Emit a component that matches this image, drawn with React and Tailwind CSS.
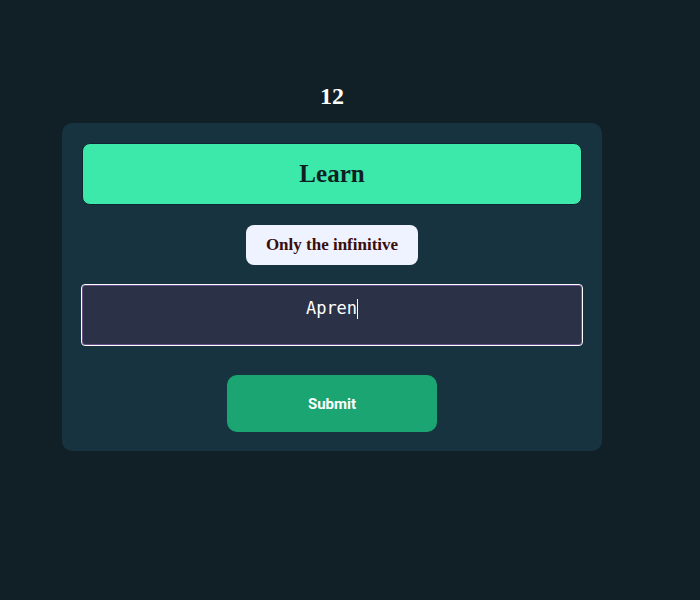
import React from "react";

export default function App() {
  return (
    <div className="min-h-[600px] w-full bg-[#111f26] pt-[80px]">
      <h1 className="w-[540px] ml-[62px] text-center text-2xl font-bold text-white font-['Liberation_Serif',serif] leading-8 mb-[11px]">
        12
      </h1>

      <div className="w-[540px] ml-[62px] rounded-[10px] bg-[#183340] px-5 pt-5 pb-[19px] flex flex-col items-center">
        <div className="w-full h-[62px] rounded-lg border border-[#0f2530] bg-[#3de9aa] flex items-center justify-center">
          <span className="text-[25px] font-bold text-[#0f1f24] font-['Liberation_Serif',serif]">
            Learn
          </span>
        </div>

        <div className="mt-5 w-[172px] h-[40px] rounded-lg bg-[#eef3ff] flex items-center justify-center">
          <span className="text-[17px] font-bold text-[#3a0d0d] font-['Liberation_Serif',serif]">
            Only the infinitive
          </span>
        </div>

        <div className="mt-5 w-full h-[60px] rounded-[3px] bg-[#2b3147] border border-[#6b4f8a] outline outline-1 outline-white flex items-center justify-center pb-[13px]">
          <span className="text-[17px] text-white font-['DejaVu_Sans_Mono',monospace]">Apren</span>
          <span className="w-px h-[20px] bg-white" />
        </div>

        <button className="mt-[30px] w-[210px] h-[57px] rounded-[10px] bg-[#1ba572] text-white text-[15px] font-bold font-['Roboto',sans-serif] pt-[2px]">
          Submit
        </button>
      </div>
    </div>
  );
}
